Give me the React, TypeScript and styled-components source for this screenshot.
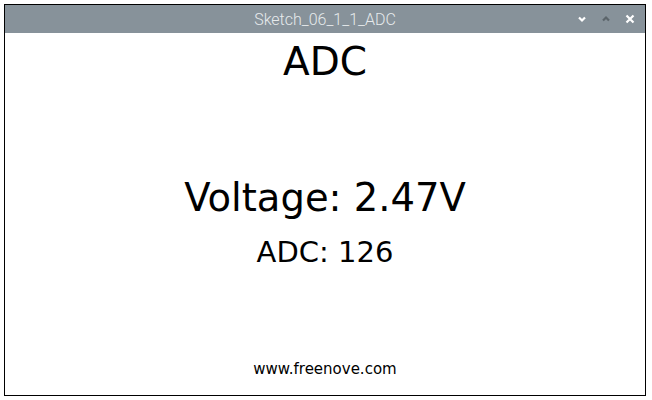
import React from "react";
import styled, { createGlobalStyle } from "styled-components";

const Global = createGlobalStyle`
  html, body { margin: 0; padding: 0; background: #ffffff; }
  body { width: 652px; height: 400px; overflow: hidden; }
`;

const Window = styled.div`
  box-sizing: border-box;
  margin: 4px 0 0 4px;
  width: 642px;
  height: 392px;
  border: 1px solid #000000;
  display: flex;
  flex-direction: column;
  background: #ffffff;
`;

const TitleBar = styled.div`
  height: 28px;
  flex: none;
  background: #87929a;
  display: grid;
  grid-template-columns: 1fr auto 1fr;
  align-items: center;
`;

const Title = styled.div`
  grid-column: 2;
  font-family: Roboto, "Liberation Sans", sans-serif;
  font-size: 16px;
  font-weight: 300;
  color: #e6eaec;
`;

const Controls = styled.div`
  grid-column: 3;
  justify-self: end;
  display: flex;
  align-items: center;
  gap: 12px;
  padding-right: 9px;
`;

const CtrlIcon = styled.svg`
  width: 12px;
  height: 12px;
  display: block;
`;

const Content = styled.div`
  flex: 1;
  display: flex;
  flex-direction: column;
  align-items: center;
  font-family: "DejaVu Sans", Verdana, sans-serif;
  color: #000000;
`;

const Text = styled.div<{ $size: number; $mt: number }>`
  font-size: ${(p) => p.$size}px;
  line-height: 1;
  margin-top: ${(p) => p.$mt}px;
  white-space: nowrap;
`;

const Footer = styled.div`
  margin-top: auto;
  margin-bottom: 18px;
  font-size: 15px;
  line-height: 1;
`;

export default function App() {
  return (
    <>
      <Global />
      <Window>
        <TitleBar>
          <Title>Sketch_06_1_1_ADC</Title>
          <Controls>
            <CtrlIcon viewBox="0 0 12 12">
              <path d="M3 4.5 L6 7.5 L9 4.5" stroke="#ffffff" strokeWidth="2.2" fill="none" />
            </CtrlIcon>
            <CtrlIcon viewBox="0 0 12 12">
              <path d="M3 7.5 L6 4.5 L9 7.5" stroke="#5c656b" strokeWidth="2.2" fill="none" />
            </CtrlIcon>
            <CtrlIcon viewBox="0 0 12 12">
              <path d="M2.5 2.5 L9.5 9.5 M9.5 2.5 L2.5 9.5" stroke="#ffffff" strokeWidth="2.2" fill="none" />
            </CtrlIcon>
          </Controls>
        </TitleBar>
        <Content>
          <Text $size={39} $mt={9}>ADC</Text>
          <Text $size={38.5} $mt={98}>Voltage: 2.47V</Text>
          <Text $size={29} $mt={20}>ADC: 126</Text>
          <Footer>www.freenove.com</Footer>
        </Content>
      </Window>
    </>
  );
}
